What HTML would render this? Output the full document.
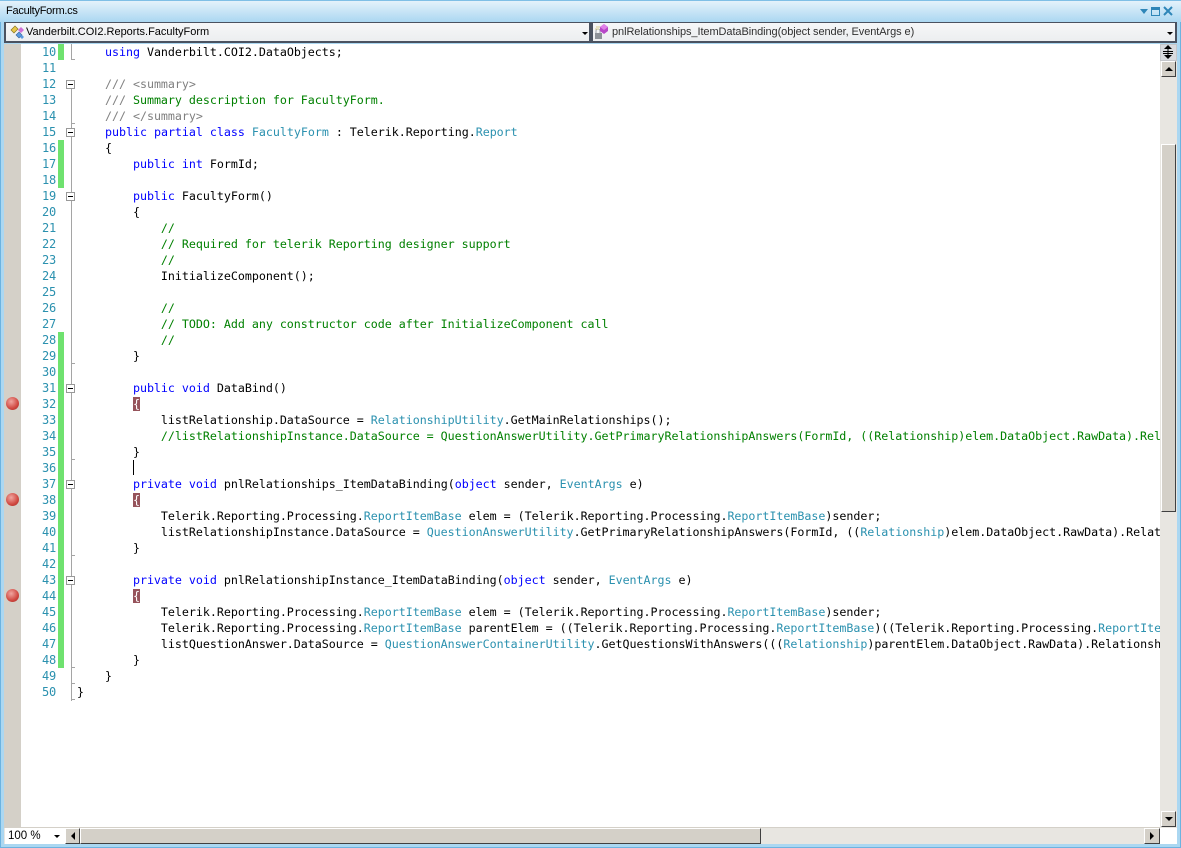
<!DOCTYPE html>
<html><head><meta charset="utf-8"><style>
html,body{margin:0;padding:0;width:1181px;height:848px;overflow:hidden;background:#fff}
div{position:absolute;box-sizing:border-box}
#t{left:0;top:0;width:1181px;height:22px;background:linear-gradient(#e4f2fb,#abd7f1);border-top:1px solid #7fbfe6}
.ui{font:11px "Liberation Sans",sans-serif;color:#000;white-space:pre}
.dd{top:22px;height:21px;background:linear-gradient(#f6f7f8,#eceef0);border:2px solid #4a5260;border-top-width:1px}
#code{left:0;top:44px;width:1160px;height:784px;overflow:hidden}
.l{left:77px;height:16px;line-height:16px;font:11.67px/16px "DejaVu Sans Mono","Liberation Mono",monospace;letter-spacing:-.024px;white-space:pre;color:#000;width:1083px;overflow:hidden}
.n{left:24px;width:32px;text-align:right;height:16px;font:12px/16px "DejaVu Sans Mono",monospace;letter-spacing:-.2px;color:#2b91af}
b{font-weight:normal}.k{color:#00f}.y{color:#2b91af}.c{color:#008000}.g{color:#808080}
.bp{background:#96535b;color:#fff}
.btn{background:#d4d0c8;border-top:1px solid #fff;border-left:1px solid #fff;border-right:1px solid #404040;border-bottom:1px solid #404040}
.g1{left:58px;width:6px;background:#6fe26f}
.box{left:66px;width:9px;height:9px;border:1px solid #999;background:#fff}
.box:after{content:"";position:absolute;left:1px;top:3px;width:5px;height:1px;background:#000}
.vl{left:71px;width:1px;background:#a5a5a5}
.tk{left:71px;width:4px;height:1px;background:#a5a5a5}
.bpc{left:6px;width:13px;height:13px;border-radius:50%;background:radial-gradient(circle at 40% 35%,#f0a6a0,#d04840 60%,#a02a28)}
.ar{width:0;height:0;border-style:solid;border-color:transparent}
</style></head><body>
<div style="left:0;top:0;width:1181px;height:848px;background:#abd7f1;border-right:1px solid #6cb3e0;border-bottom:1px solid #6cb3e0;border-left:1px solid #6cb3e0"></div>
<div id="t"></div>
<div class="ui" style="left:6px;top:3px;font-size:11px;letter-spacing:-.25px;line-height:16px">FacultyForm.cs</div>
<div class="ar" style="left:1140px;top:9px;border-width:5px 4px 0;border-top-color:#2f86b8"></div>
<div style="left:1151px;top:7px;width:9px;height:9px;border:1px solid #2f86b8;border-top-width:3px"></div>
<svg style="position:absolute;left:1163px;top:6px" width="11" height="10"><path d="M1 1 L9 9 M9 1 L1 9" stroke="#2f86b8" stroke-width="2" fill="none"/></svg>

<div class="dd" style="left:4px;width:587px"></div>
<div class="dd" style="left:591px;width:586px"></div>
<svg style="position:absolute;left:9px;top:24px" width="18" height="17"><path d="M2 6 L6 2 L9 5 L5 9Z" fill="#e8c84a" stroke="#8a7420" stroke-width=".7"/><path d="M9 6 L12 3 L15 6 L12 9Z" fill="#d070d8"/><path d="M7 11 L10 8 L13 11 L10 14Z" fill="#5a9ae0" stroke="#34609a" stroke-width=".6"/><path d="M13 11 L15 13 L13 15 L11 13Z" fill="#5a9ae0"/></svg>
<div class="ui" style="left:26px;top:25px;line-height:15px;font-size:11px">Vanderbilt.COI2.Reports.FacultyForm</div>
<div class="ar" style="left:582px;top:32px;border-width:3px 3px 0;border-top-color:#000"></div>
<svg style="position:absolute;left:594px;top:24px" width="18" height="17"><rect x="1" y="9" width="7" height="6" fill="#8d9298"/><path d="M2 9 V7 a2 2 0 0 1 4 0 V9" fill="none" stroke="#9aa0a6"/><path d="M2 3 h4 M1 5 h4" stroke="#d8cf90"/><path d="M6 3 L10 0 L14 3 L14 7 L10 10 L6 7Z" fill="#b848c8"/><path d="M6 3 L10 0 L14 3 L10 6Z" fill="#e080e8"/></svg>
<div class="ui" style="left:612px;top:25px;line-height:15px;font-size:11px;color:#303030;letter-spacing:-.08px">pnlRelationships_ItemDataBinding(object sender, EventArgs e)</div>
<div class="ar" style="left:1167px;top:32px;border-width:3px 3px 0;border-top-color:#000"></div>

<div style="left:4px;top:44px;width:1156px;height:784px;background:#fff"></div>
<div style="left:4px;top:44px;width:17px;height:784px;background:#d4d0c8"></div>

<div class="g1" style="top:44px;height:16px"></div>
<div class="g1" style="top:140px;height:48px"></div>
<div class="g1" style="top:332px;height:336px"></div>

<div class="vl" style="top:44px;height:15px"></div><div class="tk" style="top:59px"></div>
<div class="vl" style="top:89px;height:44px"></div><div class="tk" style="top:123px"></div>
<div class="vl" style="top:137px;height:59px"></div>
<div class="vl" style="top:201px;height:187px"></div><div class="tk" style="top:363px"></div>
<div class="vl" style="top:393px;height:91px"></div><div class="tk" style="top:459px"></div>
<div class="vl" style="top:489px;height:91px"></div><div class="tk" style="top:555px"></div>
<div class="vl" style="top:585px;height:116px"></div><div class="tk" style="top:667px"></div><div class="tk" style="top:683px"></div><div class="tk" style="top:699px"></div>
<div class="box" style="top:80px"></div>
<div class="box" style="top:128px"></div>
<div class="box" style="top:192px"></div>
<div class="box" style="top:384px"></div>
<div class="box" style="top:480px"></div>
<div class="box" style="top:576px"></div>

<div class="bpc" style="top:397px"></div>
<div class="bpc" style="top:493px"></div>
<div class="bpc" style="top:589px"></div>

<div class="n" style="top:44px">10</div>
<div class="n" style="top:60px">11</div>
<div class="n" style="top:76px">12</div>
<div class="n" style="top:92px">13</div>
<div class="n" style="top:108px">14</div>
<div class="n" style="top:124px">15</div>
<div class="n" style="top:140px">16</div>
<div class="n" style="top:156px">17</div>
<div class="n" style="top:172px">18</div>
<div class="n" style="top:188px">19</div>
<div class="n" style="top:204px">20</div>
<div class="n" style="top:220px">21</div>
<div class="n" style="top:236px">22</div>
<div class="n" style="top:252px">23</div>
<div class="n" style="top:268px">24</div>
<div class="n" style="top:284px">25</div>
<div class="n" style="top:300px">26</div>
<div class="n" style="top:316px">27</div>
<div class="n" style="top:332px">28</div>
<div class="n" style="top:348px">29</div>
<div class="n" style="top:364px">30</div>
<div class="n" style="top:380px">31</div>
<div class="n" style="top:396px">32</div>
<div class="n" style="top:412px">33</div>
<div class="n" style="top:428px">34</div>
<div class="n" style="top:444px">35</div>
<div class="n" style="top:460px">36</div>
<div class="n" style="top:476px">37</div>
<div class="n" style="top:492px">38</div>
<div class="n" style="top:508px">39</div>
<div class="n" style="top:524px">40</div>
<div class="n" style="top:540px">41</div>
<div class="n" style="top:556px">42</div>
<div class="n" style="top:572px">43</div>
<div class="n" style="top:588px">44</div>
<div class="n" style="top:604px">45</div>
<div class="n" style="top:620px">46</div>
<div class="n" style="top:636px">47</div>
<div class="n" style="top:652px">48</div>
<div class="n" style="top:668px">49</div>
<div class="n" style="top:684px">50</div>

<div class="l" style="top:44px">    <b class="k">using</b> Vanderbilt.COI2.DataObjects;</div>
<div class="l" style="top:76px">    <b class="g">/// &lt;summary&gt;</b></div>
<div class="l" style="top:92px">    <b class="g">///</b><b class="c"> Summary description for FacultyForm.</b></div>
<div class="l" style="top:108px">    <b class="g">/// &lt;/summary&gt;</b></div>
<div class="l" style="top:124px">    <b class="k">public</b> <b class="k">partial</b> <b class="k">class</b> <b class="y">FacultyForm</b> : Telerik.Reporting.<b class="y">Report</b></div>
<div class="l" style="top:140px">    {</div>
<div class="l" style="top:156px">        <b class="k">public</b> <b class="k">int</b> FormId;</div>
<div class="l" style="top:188px">        <b class="k">public</b> FacultyForm()</div>
<div class="l" style="top:204px">        {</div>
<div class="l c" style="top:220px">            //</div>
<div class="l c" style="top:236px">            // Required for telerik Reporting designer support</div>
<div class="l c" style="top:252px">            //</div>
<div class="l" style="top:268px">            InitializeComponent();</div>
<div class="l c" style="top:300px">            //</div>
<div class="l c" style="top:316px">            // TODO: Add any constructor code after InitializeComponent call</div>
<div class="l c" style="top:332px">            //</div>
<div class="l" style="top:348px">        }</div>
<div class="l" style="top:380px">        <b class="k">public</b> <b class="k">void</b> DataBind()</div>
<div class="l" style="top:396px">        <b class="bp">{</b></div>
<div class="l" style="top:412px">            listRelationship.DataSource = <b class="y">RelationshipUtility</b>.GetMainRelationships();</div>
<div class="l c" style="top:428px">            //listRelationshipInstance.DataSource = QuestionAnswerUtility.GetPrimaryRelationshipAnswers(FormId, ((Relationship)elem.DataObject.RawData).Relationship</div>
<div class="l" style="top:444px">        }</div>
<div style="left:133px;top:460px;width:1px;height:15px;background:#000"></div>
<div class="l" style="top:476px">        <b class="k">private</b> <b class="k">void</b> pnlRelationships_ItemDataBinding(<b class="k">object</b> sender, <b class="y">EventArgs</b> e)</div>
<div class="l" style="top:492px">        <b class="bp">{</b></div>
<div class="l" style="top:508px">            Telerik.Reporting.Processing.<b class="y">ReportItemBase</b> elem = (Telerik.Reporting.Processing.<b class="y">ReportItemBase</b>)sender;</div>
<div class="l" style="top:524px">            listRelationshipInstance.DataSource = <b class="y">QuestionAnswerUtility</b>.GetPrimaryRelationshipAnswers(FormId, ((<b class="y">Relationship</b>)elem.DataObject.RawData).Relationship</div>
<div class="l" style="top:540px">        }</div>
<div class="l" style="top:572px">        <b class="k">private</b> <b class="k">void</b> pnlRelationshipInstance_ItemDataBinding(<b class="k">object</b> sender, <b class="y">EventArgs</b> e)</div>
<div class="l" style="top:588px">        <b class="bp">{</b></div>
<div class="l" style="top:604px">            Telerik.Reporting.Processing.<b class="y">ReportItemBase</b> elem = (Telerik.Reporting.Processing.<b class="y">ReportItemBase</b>)sender;</div>
<div class="l" style="top:620px">            Telerik.Reporting.Processing.<b class="y">ReportItemBase</b> parentElem = ((Telerik.Reporting.Processing.<b class="y">ReportItemBase</b>)((Telerik.Reporting.Processing.<b class="y">ReportItemBase</b>)</div>
<div class="l" style="top:636px">            listQuestionAnswer.DataSource = <b class="y">QuestionAnswerContainerUtility</b>.GetQuestionsWithAnswers(((<b class="y">Relationship</b>)parentElem.DataObject.RawData).Relationship</div>
<div class="l" style="top:652px">        }</div>
<div class="l" style="top:668px">    }</div>
<div class="l" style="top:684px">}</div>

<!-- vertical scrollbar -->
<div style="left:1160px;top:44px;width:17px;height:784px;background:#e8e6e1"></div>
<div style="left:1160px;top:44px;width:17px;height:17px;background:#d8dade;border:1px solid #c4c6ca"></div>
<svg style="position:absolute;left:1161px;top:45px" width="15" height="15"><path d="M7 0 L3 4 H11Z M7 14 L3 10 H11Z" fill="#000"/><path d="M2 6.5 H12 M2 8.5 H12 M7 3 V12" stroke="#000" fill="none"/></svg>
<div class="btn" style="left:1161px;top:61px;width:15px;height:16px"></div>
<div class="ar" style="left:1165px;top:67px;border-width:0 4px 4px;border-bottom-color:#000"></div>
<div class="btn" style="left:1161px;top:144px;width:15px;height:368px"></div>
<div class="btn" style="left:1161px;top:811px;width:15px;height:16px"></div>
<div class="ar" style="left:1165px;top:817px;border-width:4px 4px 0;border-top-color:#000"></div>

<!-- horizontal scrollbar -->
<div style="left:4px;top:827px;width:1156px;height:1px;background:#d4d0c8"></div>
<div style="left:4px;top:828px;width:1156px;height:16px;background:#e8e6e1"></div>
<div style="left:1160px;top:828px;width:17px;height:16px;background:#fff"></div>
<div style="left:5px;top:828px;width:60px;height:16px;background:#fff"></div>
<div class="ui" style="left:8px;top:829px;line-height:14px;font-size:11.5px">100 %</div>
<div class="ar" style="left:54px;top:835px;border-width:3px 3px 0;border-top-color:#000"></div>
<div class="btn" style="left:65px;top:828px;width:15px;height:16px"></div>
<div class="ar" style="left:71px;top:832px;border-width:4px 4px 4px 0;border-right-color:#000"></div>
<div class="btn" style="left:80px;top:828px;width:681px;height:16px"></div>
<div class="btn" style="left:1144px;top:828px;width:16px;height:16px"></div>
<div class="ar" style="left:1150px;top:832px;border-width:4px 0 4px 4px;border-left-color:#000"></div>
</body></html>
